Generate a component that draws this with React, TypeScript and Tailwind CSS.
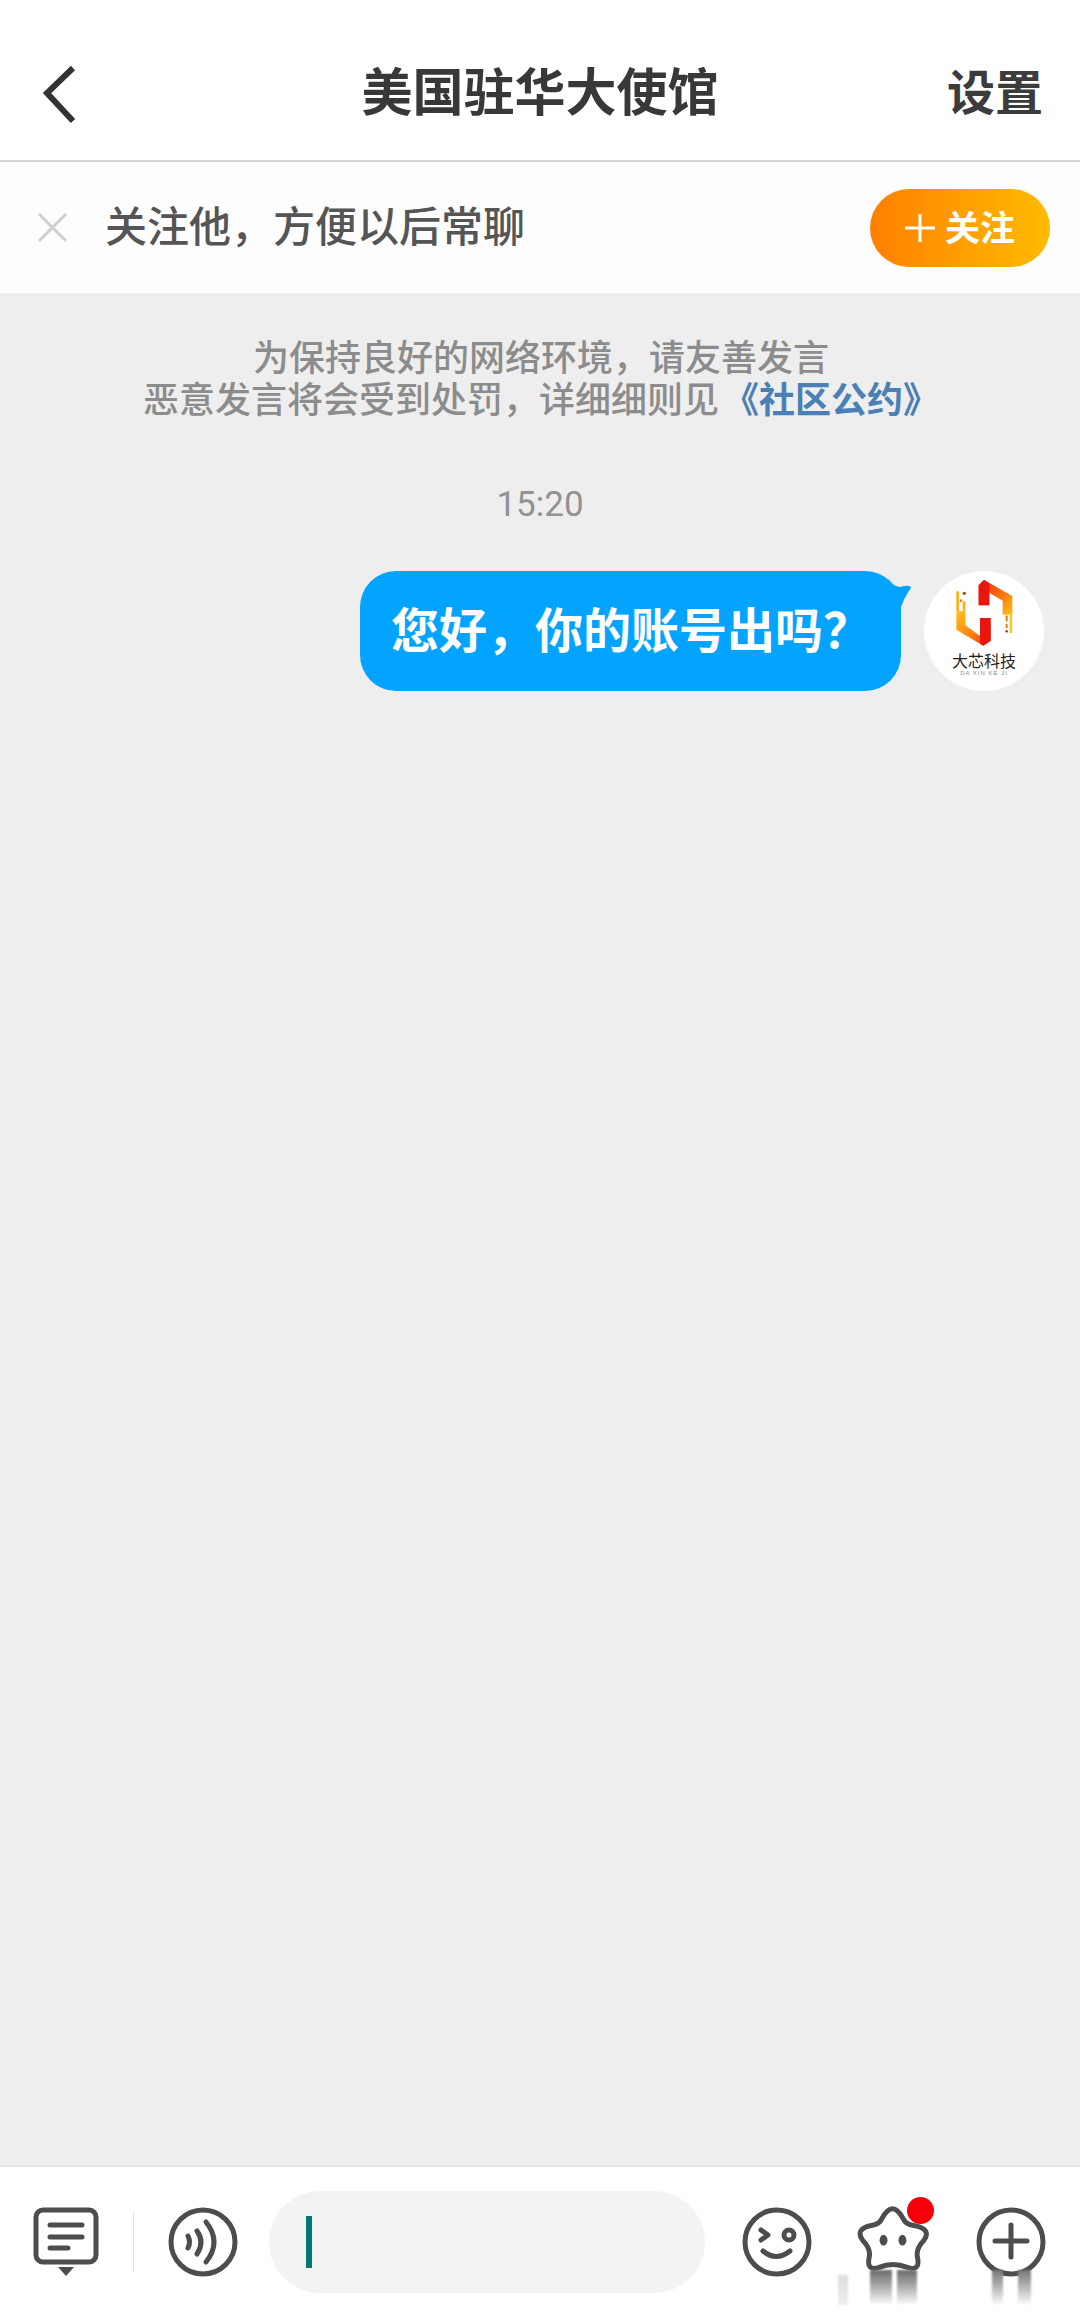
import React from 'react';

const cjk = { fontFamily: '"Noto Sans CJK SC", "Noto Sans", sans-serif' };

function Logo() {
  return (
    <svg width="60" height="70" viewBox="160 50 180 210">
      <defs>
        <linearGradient id="leftBar" x1="0" y1="0" x2="1" y2="1">
          <stop offset="0" stopColor="#ffc21a" />
          <stop offset="0.6" stopColor="#ff7a10" />
          <stop offset="1" stopColor="#e8200f" />
        </linearGradient>
        <linearGradient id="rightBar" x1="0" y1="0" x2="1" y2="1">
          <stop offset="0" stopColor="#e8200f" />
          <stop offset="0.6" stopColor="#ff7a10" />
          <stop offset="1" stopColor="#ffc21a" />
        </linearGradient>
      </defs>
      <path d="M167 150 L194 150 L194 192 L238 224 L238 170 L270 170 L270 238 L248 253 L167 205 Z" fill="url(#leftBar)" />
      <path d="M234 72 L250 56 L335 104 L335 160 L306 160 L306 118 L266 94 L266 132 L234 132 Z" fill="url(#rightBar)" />
      <path d="M234 72 L250 56 L266 66 L266 132 L234 132 Z" fill="#e8160f" />
      <path d="M238 170 L270 170 L270 238 L248 253 L238 247 Z" fill="#e8160f" />
      <path d="M318 165 V178 M318 190 V198" stroke="#e0801a" strokeWidth="6" strokeLinecap="round" />
      <path d="M331 160 V215" stroke="#ffc21a" strokeWidth="7" />
      <path d="M171 90 V150 M190 120 V150" stroke="#ffb01a" strokeWidth="8" />
      <circle cx="191" cy="96" r="5" fill="#a8501a" />
      <circle cx="181" cy="118" r="4" fill="#e0801a" />
      <circle cx="318" cy="210" r="4" fill="#a8501a" />
    </svg>
  );
}

function ListIcon() {
  return (
    <svg width="66" height="70" viewBox="0 0 66 70">
      <rect x="3" y="3" width="60" height="52" rx="7" fill="none" stroke="#4d4d4d" strokeWidth="5" />
      <path d="M17 18 H49 M17 30 H49 M17 41 H35" stroke="#4d4d4d" strokeWidth="5" strokeLinecap="round" />
      <path d="M25 60 H41 L33 69 Z" fill="#4d4d4d" />
    </svg>
  );
}

function VoiceIcon() {
  return (
    <svg width="70" height="70" viewBox="0 0 70 70">
      <circle cx="35" cy="35" r="32" fill="none" stroke="#4d4d4d" strokeWidth="5" />
      <path d="M20 29 Q23 35 20 41" fill="none" stroke="#4d4d4d" strokeWidth="5" strokeLinecap="round" />
      <path d="M29 24 Q37 35 29 47" fill="none" stroke="#4d4d4d" strokeWidth="5" strokeLinecap="round" />
      <path d="M38 15 Q54 35 38 55" fill="none" stroke="#4d4d4d" strokeWidth="5" strokeLinecap="round" />
    </svg>
  );
}

function SmileIcon() {
  return (
    <svg width="70" height="70" viewBox="0 0 70 70">
      <circle cx="35" cy="35" r="32" fill="none" stroke="#4d4d4d" strokeWidth="5" />
      <path d="M19 23 L26 28 L19 33" fill="none" stroke="#4d4d4d" strokeWidth="5" strokeLinecap="round" strokeLinejoin="round" />
      <circle cx="47" cy="28" r="5" fill="none" stroke="#4d4d4d" strokeWidth="5" />
      <path d="M21 44 Q34 55 48 44" fill="none" stroke="#4d4d4d" strokeWidth="5" strokeLinecap="round" />
    </svg>
  );
}

function StarIcon() {
  return (
    <svg width="77" height="73" viewBox="465 155 230 220">
      <path
        d="M548 205 Q580 145 612 205 Q620 222 640 225 Q700 235 675 270 Q650 295 655 320 Q665 365 625 352 Q580 335 540 352 Q500 365 510 320 Q515 295 490 270 Q465 235 520 225 Q540 222 548 205 Z"
        fill="#fff"
        stroke="#4d4d4d"
        strokeWidth="15"
      />
      <ellipse cx="553" cy="270" rx="12" ry="16" fill="#4d4d4d" />
      <ellipse cx="610" cy="270" rx="12" ry="16" fill="#4d4d4d" />
    </svg>
  );
}

function PlusIcon() {
  return (
    <svg width="70" height="70" viewBox="0 0 70 70">
      <circle cx="35" cy="35" r="32" fill="none" stroke="#4d4d4d" strokeWidth="5" />
      <path d="M35 18 V50 M19 34 H51" stroke="#4d4d4d" strokeWidth="5" strokeLinecap="round" />
    </svg>
  );
}

export default function App() {
  return (
    <div className="flex flex-col w-[1080px] h-[2317px] overflow-hidden bg-[#eeeeee] text-[#333]" style={cjk}>
      {/* title bar */}
      <div className="grid grid-cols-[1fr_auto_1fr] items-center h-[162px] bg-white border-b-2 border-[#d4d4d4] pt-[24px] px-[37px]">
        <svg width="40" height="60" viewBox="0 0 40 60" className="ml-[4px] mt-[6px]">
          <path d="M32 3 L6 28 L32 56" fill="none" stroke="#333" strokeWidth="6" />
        </svg>
        <h1 className="mb-[6px] text-[51px] leading-none font-bold text-[#383838]">美国驻华大使馆</h1>
        <span className="mb-[6px] justify-self-end text-[48px] leading-none font-bold text-[#3c3c3c]">设置</span>
      </div>

      {/* follow prompt */}
      <div className="flex items-center justify-between h-[131px] bg-[#fdfdfd] pl-[37px] pr-[30px]">
        <div className="flex items-center gap-[37px]">
          <svg width="31" height="31" viewBox="0 0 31 31">
            <path d="M2 2 L29 29 M29 2 L2 29" stroke="#cfcfcf" strokeWidth="3" />
          </svg>
          <span className="mb-[8px] text-[42px] leading-none font-medium text-[#555]">关注他，方便以后常聊</span>
        </div>
        <button className="flex items-center gap-[10px] w-[180px] h-[78px] justify-center rounded-full bg-gradient-to-r from-[#ff7f00] to-[#ffbb00] text-white">
          <svg width="30" height="28" viewBox="0 0 30 28">
            <path d="M15 0 V28 M0 14 H30" stroke="#fff" strokeWidth="3" />
          </svg>
          <span className="mb-[4px] text-[35px] leading-none font-bold">关注</span>
        </button>
      </div>

      {/* chat area */}
      <div className="flex-1 flex flex-col">
        <p className="pt-[41px] pl-[2px] text-center text-[36px] leading-[42px] font-medium text-[#8c8c8c]">
          为保持良好的网络环境，请友善发言
          <br />
          恶意发言将会受到处罚，详细细则见<span className="ml-[4px] font-bold text-[#4a80b5]">《社区公约》</span>
        </p>
        <div className="mt-[66px] text-center text-[35px] leading-[42px] text-[#929292]" style={{ fontFamily: 'Roboto, sans-serif' }}>
          15:20
        </div>
        <div className="mt-[45px] flex justify-end gap-[23px] pr-[36px]">
          <div className="relative flex items-center w-[541px] h-[120px] rounded-[36px] bg-[#03a4ff] pl-[31px]">
            <span className="mb-[8px] text-[48px] leading-none font-bold text-white">您好，你的账号出吗？</span>
            <svg width="24" height="36" viewBox="0 0 24 36" className="absolute left-[528px] top-[6px]">
              <path d="M0 2 Q5 9 12 10 Q22 7 23 11 Q18 17 13 30 L13 36 L0 36 Z" fill="#03a4ff" />
            </svg>
          </div>
          <div className="flex flex-col items-center w-[120px] h-[120px] rounded-full bg-white pt-[7px]">
            <Logo />
            <span className="mt-[2px] text-[16px] leading-[20px] font-normal text-[#222]">大芯科技</span>
            <span className="text-[6px] leading-[7px] tracking-[1px] text-[#888]" style={{ fontFamily: '"Liberation Sans", sans-serif' }}>DA XIN KE JI</span>
          </div>
        </div>
      </div>

      {/* input bar */}
      <div className="relative flex items-center h-[152px] bg-white border-t-2 border-[#e4e4e4] pl-[33px]">
        <ListIcon />
        <div className="ml-[34px] w-[1px] h-[60px] bg-[#e2e2e2]" />
        <div className="ml-[34px]"><VoiceIcon /></div>
        <div className="ml-[31px] flex items-center w-[436px] h-[102px] rounded-full bg-[#f3f3f3] pl-[37px]">
          <div className="w-[6px] h-[52px] bg-[#00796f]" />
        </div>
        <div className="ml-[37px]"><SmileIcon /></div>
        <div className="relative ml-[42px] mb-[8px]">
          <StarIcon />
          <div className="absolute left-[53px] top-[-5px] w-[27px] h-[27px] rounded-full bg-[#f40008]" />
        </div>
        <div className="ml-[45px]"><PlusIcon /></div>

        {/* faded watermark under the icons */}
        <div className="absolute left-[870px] top-[103px] w-[22px] h-[35px] blur-[1px] bg-gradient-to-b from-[#6a6a6a] to-white" />
        <div className="absolute left-[897px] top-[103px] w-[20px] h-[35px] blur-[1px] bg-gradient-to-b from-[#6a6a6a] to-white" />
        <div className="absolute left-[992px] top-[103px] w-[11px] h-[35px] blur-[1px] bg-gradient-to-b from-[#777] to-white" />
        <div className="absolute left-[1018px] top-[103px] w-[13px] h-[35px] blur-[1px] bg-gradient-to-b from-[#777] to-white" />
        <div className="absolute left-[838px] top-[108px] w-[10px] h-[30px] blur-[1px] bg-gradient-to-b from-[#ddd] to-[#eee]" />
      </div>
    </div>
  );
}
